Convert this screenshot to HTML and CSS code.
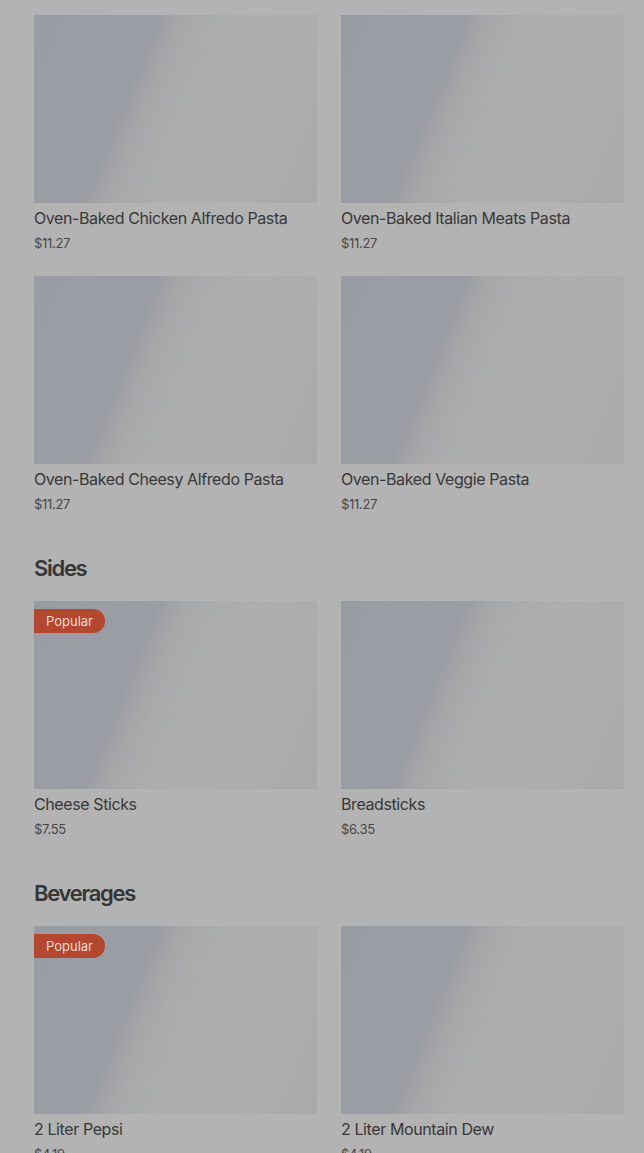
FILE: index.html
```html
<!DOCTYPE html>
<html lang="en">
  <head>
    <meta charset="UTF-8" />
    <meta name="viewport" content="width=device-width, initial-scale=1.0" />
    <title>Menu</title>
    <link rel="stylesheet" href="styles.css">
  </head>

  <body>
    <div class="menu">
      <!-- Pasta -->
      <section class="section">
        <div class="grid">
          <div class="card">
            <div class="thumb"></div>
            <div class="name">Oven-Baked Chicken Alfredo Pasta</div>
            <div class="price">$11.27</div>
          </div>
          <div class="card">
            <div class="thumb"></div>
            <div class="name">Oven-Baked Italian Meats Pasta</div>
            <div class="price">$11.27</div>
          </div>
          <div class="card">
            <div class="thumb"></div>
            <div class="name">Oven-Baked Cheesy Alfredo Pasta</div>
            <div class="price">$11.27</div>
          </div>
          <div class="card">
            <div class="thumb"></div>
            <div class="name">Oven-Baked Veggie Pasta</div>
            <div class="price">$11.27</div>
          </div>
        </div>
      </section>

      <!-- Sides -->
      <section class="section">
        <h2 class="section-title">Sides</h2>
        <div class="grid">
          <div class="card">
            <div class="thumb">
              <span class="badge">Popular</span>
            </div>
            <div class="name">Cheese Sticks</div>
            <div class="price">$7.55</div>
          </div>
          <div class="card">
            <div class="thumb"></div>
            <div class="name">Breadsticks</div>
            <div class="price">$6.35</div>
          </div>
        </div>
      </section>

      <!-- Beverages -->
      <section class="section">
        <h2 class="section-title">Beverages</h2>
        <div class="grid">
          <div class="card">
            <div class="thumb">
              <span class="badge">Popular</span>
            </div>
            <div class="name">2 Liter Pepsi</div>
            <div class="price">$4.19</div>
          </div>
          <div class="card">
            <div class="thumb"></div>
            <div class="name">2 Liter Mountain Dew</div>
            <div class="price">$4.19</div>
          </div>
        </div>
      </section>
    </div>
  </body>
</html>
```

FILE: styles.css
```css
/* Global Styles */
body {
  font-family: Inter, "Noto Sans", sans-serif;
  background-color: #b3b3b3;
  color: #3b3b3b;
  margin: 0;
  padding: 0;
  overflow: hidden;
}

.menu {
  padding: 15px 20px 0 34px;
}

.section + .section {
  margin-top: 38px;
}

.section-title {
  margin: 0 0 17px;
  font-size: 22px;
  line-height: 32px;
  font-weight: 600;
  letter-spacing: -1.3px;
  color: #363636;
}

/* Item Grid */
.grid {
  display: grid;
  grid-template-columns: 1fr 1fr;
  column-gap: 24px;
  row-gap: 23px;
}

.thumb {
  position: relative;
  height: 188px;
  background: linear-gradient(
    112deg,
    #999ca3 0%,
    #9a9da3 35%,
    #a5a6a8 41%,
    #aaabab 48%,
    #aeaeae 62%,
    #acacac 85%,
    #a9a9a9 100%
  );
}

.badge {
  position: absolute;
  top: 8px;
  left: 0;
  height: 24px;
  line-height: 24px;
  padding: 0 12px;
  font-size: 13px;
  color: #f1d9d2;
  background-color: #b3472f;
  border-radius: 0 12px 12px 0;
}

.name {
  margin-top: 4px;
  font-size: 16px;
  line-height: 22px;
  font-weight: 400;
  letter-spacing: -0.4px;
  color: #383838;
}

.price {
  margin-top: 4px;
  font-size: 13px;
  line-height: 20px;
  letter-spacing: -0.3px;
  color: #474747;
}
```
